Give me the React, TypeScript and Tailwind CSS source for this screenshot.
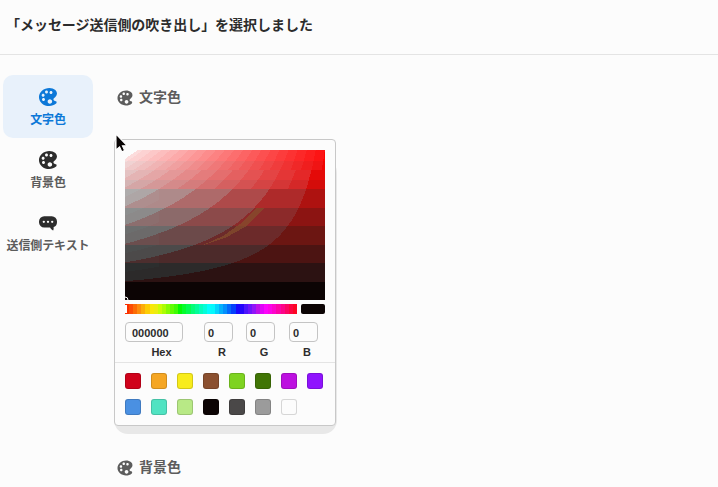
import React from 'react';
import { IoIosColorPalette } from 'react-icons/io';

const shadeRows = [
  { top: 0, height: 11, fill: '#fc0400' },
  { top: 11, height: 9, fill: '#f00402' },
  { top: 20, height: 10, fill: '#e40a08' },
  { top: 30, height: 9, fill: '#d40c0a' },
  { top: 39, height: 19, fill: '#ae1210' },
  { top: 58, height: 18, fill: '#8c1412' },
  { top: 76, height: 19, fill: '#6c1612' },
  { top: 95, height: 18, fill: '#4c1412' },
  { top: 113, height: 19, fill: '#2c1212' },
  { top: 132, height: 18, fill: '#0c0404' },
];

const coarse = [[0.125, 42], [0.25, 74], [0.375, 106], [0.5, 138], [0.625, 166], [0.75, 176]];
const halfSteps = [[0.1875, 46], [0.3125, 78], [0.4375, 110], [0.5625, 142], [0.6875, 172]];
const medium = Array.from({ length: 14 }, (_, i) => [(i + 2) / 16, 12 + (i + 2) * 14]);
const fine = Array.from({ length: 22 }, (_, i) => [(i + 2) / 24, (i + 2) * 10]);

function contour(level: number) {
  const points = ['0,0'];
  const limit = 218 * (1 - level);
  for (let i = 0; i <= 50; i++) {
    const x = (limit * (50 - i)) / 50;
    points.push(`${x.toFixed(1)},${(150 * (1 - level / (1 - x / 218))).toFixed(1)}`);
  }
  return points.join(' ');
}

function Tints({ levels, clip }: { levels: number[][]; clip: string }) {
  return levels.map(([level, value]) => (
    <polygon
      key={level}
      points={contour(level)}
      fill={`rgb(0,${Math.round(value)},${Math.round(value)})`}
      clipPath={`url(#${clip})`}
      className="mix-blend-lighten"
    />
  ));
}

const hues = [
  '#fa3000', '#fc4c04', '#fc6c04', '#fc8c0c', '#fcac08', '#fccc04', '#f8e808', '#ecec10', '#ccfc04', '#acfc04',
  '#84fc04', '#60fc04', '#40fc04', '#04f804', '#04fc2c', '#04fc50', '#04fc78', '#04fc98', '#04fcbc', '#04fcd8',
  '#04fcfc', '#04f8fc', '#04d4fc', '#04b0fc', '#0490fc', '#0468fc', '#0440fc', '#1808fc', '#2404fc', '#4c14fc',
  '#6c14fc', '#9014f8', '#bc10e8', '#e004f8', '#fc04fc', '#fc04e8', '#fc04cc', '#fc04a8', '#fc0488', '#fc0464',
  '#fc0440', '#fc0424',
];

const swatches = [
  '#d0021b', '#f5a623', '#f8ec1c', '#8b5030', '#7ed321', '#417505', '#bd10e0', '#9013fe',
  '#4a90e2', '#50e3c2', '#b8e986', '#0c0404', '#4a4848', '#9b9b9b', '#fcfcfc',
];

function NavItem({ label, active, children }: { label: string; active?: boolean; children: React.ReactNode }) {
  return (
    <button className={`flex h-[63px] w-[90px] flex-col items-center rounded-[10px] pt-[12px] text-[12px] leading-[18px] font-bold tracking-[-0.1px] whitespace-nowrap ${active ? 'bg-[#e8f1fb] text-[#0c78d8]' : 'text-[#5c5c5c]'}`}>
      <span className={`flex h-[20px] items-center ${active ? '' : 'text-[#2c2c2c]'}`}>{children}</span>
      <span className="mt-[4px]">{label}</span>
    </button>
  );
}

function Heading({ children }: { children: React.ReactNode }) {
  return (
    <h2 className="flex h-[20px] items-center gap-[4px] text-[14px] leading-[20px] font-bold text-[#5c5c5c]">
      <IoIosColorPalette className="mt-[2px] size-[20px]" />
      {children}
    </h2>
  );
}

function Field({ label, value, wide }: { label: string; value: string; wide?: boolean }) {
  return (
    <label className="flex flex-col">
      <span className={`flex h-[20px] items-center rounded-[4px] border border-[#c4c4c4] pt-[2px] text-[11px] ${wide ? 'w-[58px] pl-[6px]' : 'w-[29px] pl-[3px]'}`}>{value}</span>
      <span className={`mt-[3px] text-center text-[11px] leading-[14px] ${wide ? 'w-[73px]' : 'w-[36px]'}`}>{label}</span>
    </label>
  );
}

export default function App() {
  return (
    <div className="h-[487px] overflow-hidden bg-[#fcfcfc] font-['Liberation_Sans','Noto_Sans_CJK_JP',sans-serif] text-[#2c2c2c]">
      <header className="h-[55px] border-b border-[#e4e4e4] pt-[15px] pl-[6px]">
        <h1 className="text-[14px] leading-[20px] font-bold tracking-[-0.04px]">「メッセージ送信側の吹き出し」を選択しました</h1>
      </header>
      <div className="flex pt-[20px] pl-[3px]">
        <nav className="flex w-[90px] flex-col">
          <NavItem label="文字色" active><IoIosColorPalette className="size-[24px]" /></NavItem>
          <NavItem label="背景色"><IoIosColorPalette className="size-[24px]" /></NavItem>
          <NavItem label="送信側テキスト">
            <svg className="h-[16px] w-[20px]" viewBox="0 0 20 16" fill="currentColor">
              <path d="M6.2 1.2h7.6a5.2 5.2 0 0 1 5.2 5.2v.8c0 2.6-1.4 4.2-3.4 4.9.1 1 .2 2-.4 3.3-1.4-.6-2.4-1.5-3.1-3H6.2A5.2 5.2 0 0 1 1 7.2v-.8a5.2 5.2 0 0 1 5.2-5.2Z" />
              <g fill="#fcfcfc"><circle cx="5.8" cy="6.8" r="1.15" /><circle cx="10" cy="6.8" r="1.15" /><circle cx="14.2" cy="6.8" r="1.15" /></g>
            </svg>
          </NavItem>
        </nav>
        <main className="relative ml-[21px] pt-[12px]">
          <div className="pl-[1px]"><Heading>文字色</Heading></div>
          <div className="relative isolate mt-[32px] w-[222px]">
            <div className="absolute top-[20px] right-[-1px] bottom-[-8px] left-0 -z-10 rounded-[14px] bg-[#e8e8e8]" />
            <section className="h-[287px] rounded-[4px] border border-[#c8c8c8] bg-[#fcfcfc] pt-[10px]">
              <div className="px-[10px]">
                <svg className="block h-[150px] w-[200px]" viewBox="0 0 200 150" shapeRendering="crispEdges">
                  <clipPath id="upper"><rect width="200" height="20" /></clipPath>
                  <clipPath id="middle"><rect y="20" width="200" height="19" /></clipPath>
                  <clipPath id="lower"><rect y="39" width="200" height="93" /></clipPath>
                  <clipPath id="edge"><rect y="39" width="34" height="93" /></clipPath>
                  <g className="isolate">
                    {shadeRows.map((row) => <rect key={row.top} y={row.top} width="200" height={row.height} fill={row.fill} />)}
                    <Tints levels={fine} clip="upper" />
                    <Tints levels={medium} clip="middle" />
                    <Tints levels={coarse} clip="lower" />
                    <Tints levels={halfSteps} clip="edge" />
                  </g>
                  <path d="M0 0h13L4 6 0 9Z" fill="#fcfcfc" />
                  <path d="M78 95 98 86 115 74 131 58H139L131 67 120 77 100 88Z" fill="#84502c" opacity="0.7" />
                  <circle cx="0" cy="150" r="3" fill="none" stroke="#fff" strokeWidth="1" shapeRendering="auto" />
                </svg>
                <div className="mt-[4px] flex h-[10px] justify-between">
                  <div className="relative flex w-[172px]">
                    {hues.map((hue) => <span key={hue} className="flex-1" style={{ backgroundColor: hue }} />)}
                    <span className="absolute top-px left-0 h-[8px] w-[2px] bg-white" />
                  </div>
                  <span className="w-[24px] rounded-[2px] bg-[#0c0404]" />
                </div>
                <div className="mt-[8px] flex h-[40px] font-bold">
                  <Field label="Hex" value="000000" wide />
                  <span className="ml-[6px]"><Field label="R" value="0" /></span>
                  <span className="ml-[6px]"><Field label="G" value="0" /></span>
                  <span className="ml-[7px]"><Field label="B" value="0" /></span>
                </div>
              </div>
              <div className="flex flex-wrap gap-[10px] border-t border-[#e4e4e4] pt-[10px] pl-[10px]">
                {swatches.map((color) => <span key={color} className="size-[16px] rounded-[3px] border border-black/15" style={{ backgroundColor: color }} />)}
              </div>
            </section>
          </div>
          <div className="mt-[31px] pl-[1px]"><Heading>背景色</Heading></div>
          <svg className="absolute top-[58px] left-[1px] h-[21px] w-[14px]" viewBox="0 0 14 21">
            <path d="M1 1v16l3.6-3.2 2.2 5 2.8-1.2-2.2-4.9H12Z" fill="#080404" stroke="#fff" strokeWidth="1.1" />
          </svg>
        </main>
      </div>
    </div>
  );
}
